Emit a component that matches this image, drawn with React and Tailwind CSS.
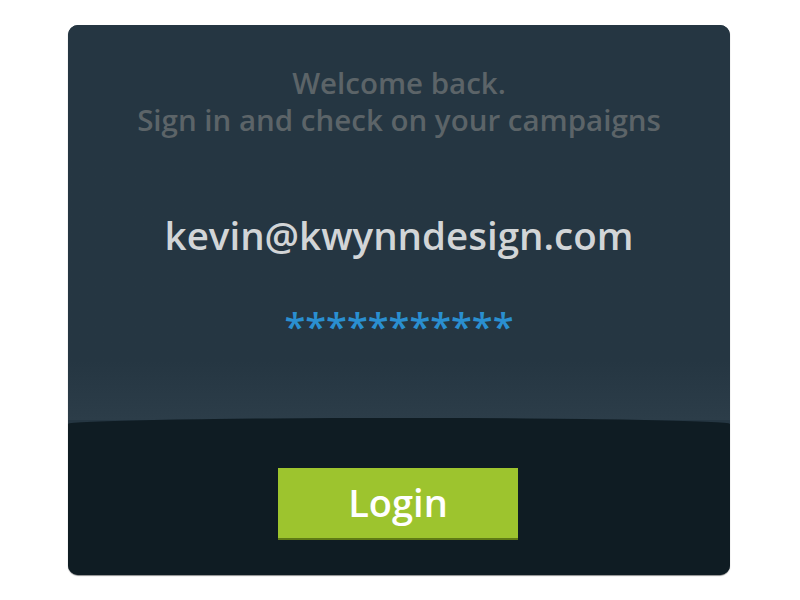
export default function App() {
  return (
    <div className="w-[800px] h-[600px] bg-white pt-[25px] pl-[68px]" style={{ fontFamily: '"Open Sans", "Liberation Sans", sans-serif' }}>
      <div className="w-[662px] h-[550px] rounded-[10px] overflow-hidden bg-[#253642] flex flex-col shadow-[0_1px_1px_rgba(0,0,0,0.45)]">
        <div className="h-[395px] flex flex-col items-center bg-gradient-to-b from-[#253642] from-85% to-[#2c3d49]">
          <div className="mt-[39px] text-center text-[29.5px] leading-[37px] font-semibold text-[#5c6468]">
            <p>Welcome back.</p>
            <p>Sign in and check on your campaigns</p>
          </div>
          <p className="mt-[73px] text-[38.5px] leading-[48px] font-semibold text-[#d2d5d7]">kevin@kwynndesign.com</p>
          <p className="mt-[44px] text-[38px] leading-[46px] font-semibold text-[#2a8fd0]">***********</p>
        </div>
        <div className="flex-1 -mt-[2px] bg-[#0f1c23] rounded-t-[50%_6px] flex justify-center pt-[50px]">
          <button className="w-[240px] h-[72px] -ml-[2px] bg-[#9dc42e] border-b-2 border-[#5f7a16] text-white text-[38px] font-semibold leading-none pb-[2px]">
            Login
          </button>
        </div>
      </div>
    </div>
  );
}
